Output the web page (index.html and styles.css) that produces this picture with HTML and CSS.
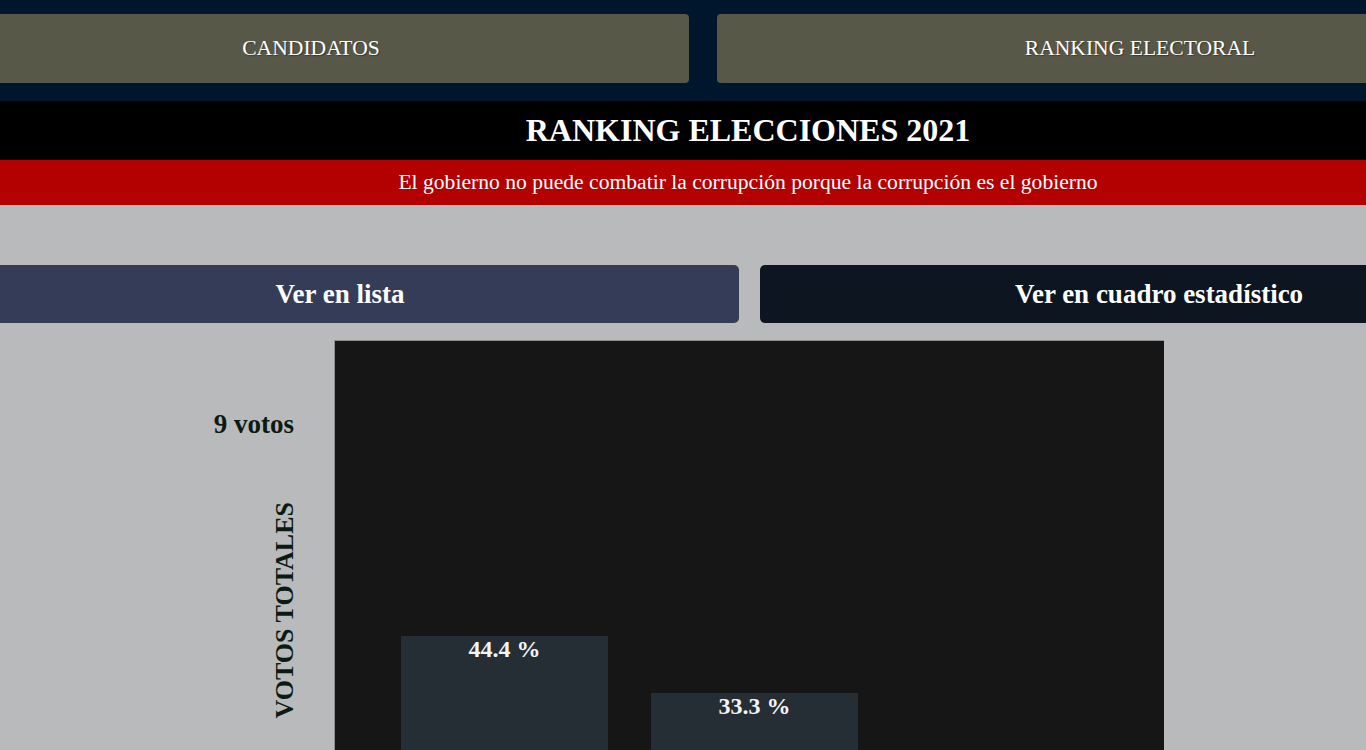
FILE: index.html
```html
<!DOCTYPE html>
<html lang="es">
<head>
<meta charset="utf-8">
<title>Ranking Elecciones 2021</title>
<link rel="stylesheet" href="styles.css">
</head>
<body>
<div class="page">
  <nav class="nav">
    <a class="nav-btn nav-btn-left">CANDIDATOS</a>
    <a class="nav-btn nav-btn-right">RANKING ELECTORAL</a>
  </nav>
  <header class="title-bar">
    <h1 class="title">RANKING ELECCIONES 2021</h1>
  </header>
  <div class="motto">El gobierno no puede combatir la corrupción porque la corrupción es el gobierno</div>
  <main class="main">
    <div class="tabs">
      <button class="tab tab-list">Ver en lista</button>
      <button class="tab tab-chart">Ver en cuadro estadístico</button>
    </div>
    <section class="chart-row">
      <div class="y-axis">
        <div class="total">9 votos</div>
        <div class="axis-label">VOTOS TOTALES</div>
      </div>
      <div class="chart">
        <div class="bar" style="height:228px"><span class="pct">44.4 %</span></div>
        <div class="bar" style="height:171px"><span class="pct">33.3 %</span></div>
      </div>
    </section>
  </main>
</div>
</body>
</html>
```

FILE: styles.css
```css
html, body {
  margin: 0;
  padding: 0;
}
body {
  background: #b9babb;
  overflow: hidden;
  font-family: "Liberation Serif", "Times New Roman", serif;
}
.page {
  width: 1630px;
  margin-left: -67px;
}
.nav {
  background: #00162c;
  display: flex;
  gap: 28px;
  padding: 14px 0 18px;
}
.nav-btn {
  background: #585848;
  color: #ffffff;
  height: 69px;
  display: flex;
  align-items: center;
  justify-content: center;
  font-size: 21.6px;
  border-radius: 4px;
  text-shadow: 1px 1px 1px rgba(0,0,0,0.35);
}
.nav-btn-left {
  width: 756px;
}
.nav-btn-right {
  flex: 1;
}
.title-bar {
  background: #000000;
  height: 59px;
  display: flex;
  align-items: center;
  justify-content: center;
}
.title {
  margin: 0;
  color: #ffffff;
  font-size: 32px;
  font-weight: bold;
}
.motto {
  background: #b30000;
  color: #ffffff;
  height: 45px;
  display: flex;
  align-items: center;
  justify-content: center;
  font-size: 21.6px;
}
.main {
  padding-top: 60px;
}
.tabs {
  display: flex;
  gap: 21px;
  padding: 0 5px 0 8px;
}
.tab {
  flex: 1;
  height: 58px;
  border: none;
  border-radius: 5px;
  color: #ffffff;
  font-family: inherit;
  font-size: 27px;
  font-weight: bold;
  padding: 0;
}
.tab-list {
  background: #353c58;
}
.tab-chart {
  background: #0d1620;
}
.chart-row {
  display: flex;
  gap: 40px;
  margin-top: 17px;
}
.y-axis {
  width: 361px;
  display: flex;
  flex-direction: column;
  align-items: flex-end;
  padding-top: 69px;
  color: #0b1a12;
  font-weight: bold;
}
.total {
  font-size: 27px;
}
.axis-label {
  margin-top: 62px;
  font-size: 26px;
  writing-mode: vertical-rl;
  transform: rotate(180deg);
  line-height: 1;
  margin-right: -4px;
}
.chart {
  box-sizing: border-box;
  width: 830px;
  height: 540px;
  background: #161616;
  border-top: 1px solid #8e8e8e;
  border-left: 1px solid #8e8e8e;
  display: flex;
  align-items: flex-end;
  gap: 43px;
  padding: 0 0 16px 66px;
}
.bar {
  width: 207px;
  background: #252e35;
  text-align: center;
}
.pct {
  color: #f4f4f4;
  font-size: 24px;
  font-weight: bold;
}
```
